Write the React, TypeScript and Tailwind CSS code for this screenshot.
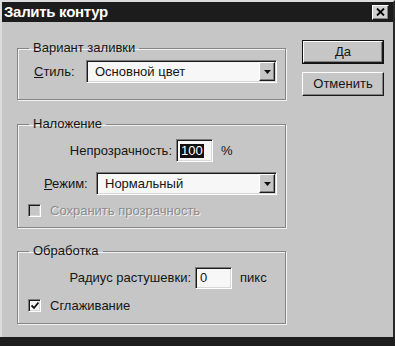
import React from "react";

const sunken =
  "border border-t-[#7a7a7a] border-l-[#7a7a7a] border-b-white border-r-white shadow-[inset_1px_1px_0_#1a1a1a,inset_-1px_-1px_0_#d8d8d8]";
const raised =
  "border border-t-white border-l-white border-b-[#1a1a1a] border-r-[#1a1a1a] shadow-[inset_-1px_-1px_0_#808080]";

function Group({ title, className, children }: { title: string; className?: string; children: React.ReactNode }) {
  return (
    <fieldset
      className={`border border-[#858585] shadow-[inset_1px_1px_0_#f2f2f2,1px_1px_0_#f2f2f2] ${className ?? ""}`}
    >
      <legend className="ml-[11px] px-[4px] text-[13px] leading-[14px]">{title}</legend>
      {children}
    </fieldset>
  );
}

function Combo({ value, className }: { value: string; className?: string }) {
  return (
    <div className={`flex h-[23px] items-stretch bg-[#f7f7f7] ${sunken} ${className ?? ""}`}>
      <span className="flex-1 pl-[8px] pt-[3px] text-[13px] leading-[15px]">{value}</span>
      <div className={`m-[1px] flex w-[16px] items-center justify-center bg-[#c6c6c6] ${raised}`}>
        <svg width="7" height="4" viewBox="0 0 7 4">
          <path d="M0 0h7L3.5 4z" fill="#111" />
        </svg>
      </div>
    </div>
  );
}

function Check({ checked, disabled, label }: { checked?: boolean; disabled?: boolean; label: string }) {
  return (
    <div className="flex h-[13px] items-center">
      <div
        className={`ml-[10px] flex h-[13px] w-[13px] items-center justify-center ${sunken} ${
          disabled ? "bg-[#c6c6c6]" : "bg-[#f4f4f4]"
        }`}
      >
        {checked && (
          <svg width="8" height="8" viewBox="0 0 8 8">
            <path d="M0.5 3.5l2.5 2.5 4.5-5.5" stroke="#111" strokeWidth="1.8" fill="none" />
          </svg>
        )}
      </div>
      <span
        className={`ml-[9px] text-[13px] leading-[14px] ${
          disabled ? "text-[#8c8c8c] [text-shadow:1px_1px_0_#f0f0f0]" : ""
        }`}
      >
        {label}
      </span>
    </div>
  );
}

export default function App() {
  return (
    <div className="flex h-[346px] w-[395px] flex-col bg-[#c6c6c6] font-['Liberation_Sans',Arial,sans-serif] text-[#151515]">
      <div className="flex flex-1 flex-col border-l-[2px] border-r-[2px] border-t-[2px] border-l-[#dcdcdc] border-r-[#2a2a2a] border-t-[#dcdcdc]">
        {/* Title bar */}
        <div className="flex h-[20px] items-center justify-between bg-[#1c1c1c] pl-[2px] pr-[4px]">
          <span className="text-[15px] font-bold leading-[16px] tracking-[-0.3px] text-white">Залить контур</span>
          <div className={`flex h-[15px] w-[17px] items-center justify-center bg-[#d0d0d0] ${raised}`}>
            <svg width="9" height="8" viewBox="0 0 9 8">
              <path d="M1 0.5l7 7M8 0.5l-7 7" stroke="#000" strokeWidth="1.8" />
            </svg>
          </div>
        </div>

        {/* Body */}
        <div className="flex gap-[16px] pl-[15px] pt-[18px]">
          <div className="flex w-[269px] flex-col">
            <Group title="Вариант заливки" className="mt-[1px] pb-[16px]">
              <div className="mt-[5px] flex items-center pr-[8px]">
                <span className="ml-[16px] w-[52px] text-[13px]">
                  <u>С</u>тиль:
                </span>
                <Combo value="Основной цвет" className="flex-1" />
              </div>
            </Group>

            <Group title="Наложение" className="mt-[17px] pb-[10px]">
              <div className="mt-[8px] flex items-center">
                <span className="w-[154px] text-right text-[13px]">Непрозрачность:</span>
                <div className={`ml-[4px] flex h-[23px] w-[37px] items-center bg-[#f7f7f7] pl-[3px] ${sunken}`}>
                  <span className="bg-[#111] px-[1px] text-[13px] leading-[14px] text-white">100</span>
                </div>
                <span className="ml-[8px] text-[13px]">%</span>
              </div>
              <div className="mt-[10px] flex items-center pr-[8px]">
                <span className="ml-[26px] w-[52px] text-[13px]">
                  <u>Р</u>ежим:
                </span>
                <Combo value="Нормальный" className="flex-1" />
              </div>
              <div className="mt-[9px]">
                <Check disabled label="Сохранить прозрачность" />
              </div>
            </Group>

            <Group title="Обработка" className="mt-[16px] pb-[11px]">
              <div className="mt-[9px] flex items-center">
                <span className="w-[173px] text-right text-[13px]">Радиус растушевки:</span>
                <div className={`ml-[4px] flex h-[22px] w-[37px] items-center bg-[#f7f7f7] pl-[4px] ${sunken}`}>
                  <span className="text-[13px] leading-[14px]">0</span>
                </div>
                <span className="ml-[8px] text-[13px]">пикс</span>
              </div>
              <div className="mt-[10px]">
                <Check checked label="Сглаживание" />
              </div>
            </Group>
          </div>

          <div className="flex w-[82px] flex-col">
            <div className="border border-[#111]">
              <div className={`flex h-[22px] items-center justify-center bg-[#c6c6c6] text-[13px] ${raised}`}>Да</div>
            </div>
            <div className={`mt-[8px] flex h-[24px] items-center justify-center bg-[#c6c6c6] text-[13px] ${raised}`}>
              Отменить
            </div>
          </div>
        </div>
      </div>
      <div className="h-[9px] bg-[#1e1e1e]" />
    </div>
  );
}
